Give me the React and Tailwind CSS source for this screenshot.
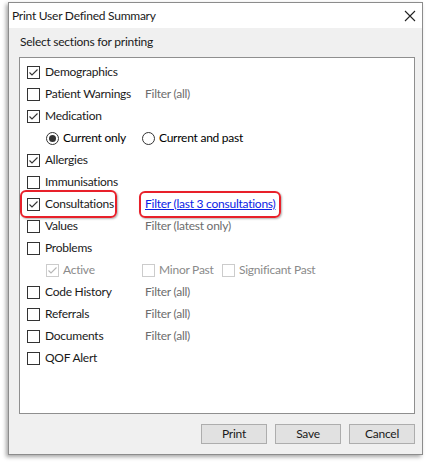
import React from 'react';

const font = { fontFamily: 'Lato, "Noto Sans", sans-serif', letterSpacing: '-0.25px' };

const Check = ({ checked, disabled }) => (
  <span
    className={`w-[13px] h-[13px] border flex items-center justify-center bg-white shrink-0 ${
      disabled ? 'border-[#cccccc]' : 'border-[#333333]'
    }`}
  >
    {checked && (
      <svg width="11" height="11" viewBox="0 0 11 11">
        <polyline
          points="1.5,5.5 4,8 9.5,2.5"
          fill="none"
          stroke={disabled ? '#b5b5b5' : '#333333'}
          strokeWidth="1.1"
        />
      </svg>
    )}
  </span>
);

const Radio = ({ checked }) => (
  <span className="w-[13px] h-[13px] rounded-full border border-[#333333] bg-white flex items-center justify-center shrink-0">
    {checked && <span className="w-[7px] h-[7px] rounded-full bg-[#333333]" />}
  </span>
);

const Row = ({ label, checked, filter, highlight }) => (
  <div className="flex items-center h-[22px]">
    <div className="w-[118px] flex items-center">
      <span className="relative flex items-center gap-[5px]">
        <Check checked={checked} />
        <span className="text-[#1a1a1a]">{label}</span>
        {highlight && (
          <span className="absolute -left-[7px] -right-[3px] -top-[5px] -bottom-[5px] border-2 border-[#e8202a] rounded-[6px] shadow-[1px_1px_2px_rgba(0,0,0,0.3)]" />
        )}
      </span>
    </div>
    {filter && (
      <span className="relative">
        <span className={highlight ? 'text-[#0b22e6] underline' : 'text-[#6d6d6d]'}>{filter}</span>
        {highlight && (
          <span className="absolute -left-[6px] -right-[6px] -top-[4px] -bottom-[5px] border-2 border-[#e8202a] rounded-[6px] shadow-[1px_1px_2px_rgba(0,0,0,0.3)]" />
        )}
      </span>
    )}
  </div>
);

const Btn = ({ children }) => (
  <button className="w-[66px] h-[20px] bg-[#e1e1e1] border border-[#adadad] text-[#1a1a1a] text-[12px] leading-none">
    {children}
  </button>
);

export default function App() {
  return (
    <div className="w-[427px] h-[464px] bg-white pt-[2px] pl-[8px] text-[12px]" style={font}>
      <div className="w-[415px] h-[453px] bg-[#f0f0f0] border border-[#8c8c8c] shadow-[-2px_2px_4px_rgba(0,0,0,0.35)] flex flex-col">
        <div className="h-[25px] bg-white flex items-center justify-between pl-[3px] pr-[6px]">
          <span className="text-[#1a1a1a]">Print User Defined Summary</span>
          <svg width="12" height="12" viewBox="0 0 12 12">
            <path d="M1 1 L11 11 M11 1 L1 11" stroke="#222" strokeWidth="1.1" />
          </svg>
        </div>
        <div className="pl-[11px] pt-[5px] h-[29px] text-[#1a1a1a]">Select sections for printing</div>
        <div className="ml-[10px] mr-[7px] h-[357px] bg-white border border-[#8f8f8f] pl-[7px] pt-[3px]">
          <Row label="Demographics" checked />
          <Row label="Patient Warnings" filter="Filter (all)" />
          <Row label="Medication" checked />
          <div className="flex items-center h-[22px] pl-[19px]">
            <div className="w-[96px] flex items-center gap-[4px]">
              <Radio checked />
              <span>Current only</span>
            </div>
            <div className="flex items-center gap-[4px]">
              <Radio />
              <span>Current and past</span>
            </div>
          </div>
          <Row label="Allergies" checked />
          <Row label="Immunisations" />
          <Row label="Consultations" checked filter="Filter (last 3 consultations)" highlight />
          <Row label="Values" filter="Filter (latest only)" />
          <Row label="Problems" />
          <div className="flex items-center h-[22px] pl-[19px] text-[#8a8a8a]">
            <div className="w-[96px] flex items-center gap-[4px]">
              <Check checked disabled />
              <span>Active</span>
            </div>
            <div className="w-[80px] flex items-center gap-[4px]">
              <Check disabled />
              <span>Minor Past</span>
            </div>
            <div className="flex items-center gap-[4px]">
              <Check disabled />
              <span>Significant Past</span>
            </div>
          </div>
          <Row label="Code History" filter="Filter (all)" />
          <Row label="Referrals" filter="Filter (all)" />
          <Row label="Documents" filter="Filter (all)" />
          <Row label="QOF Alert" />
        </div>
        <div className="flex justify-end gap-[8px] mr-[7px] mt-[10px]">
          <Btn>Print</Btn>
          <Btn>Save</Btn>
          <Btn>Cancel</Btn>
        </div>
      </div>
    </div>
  );
}
